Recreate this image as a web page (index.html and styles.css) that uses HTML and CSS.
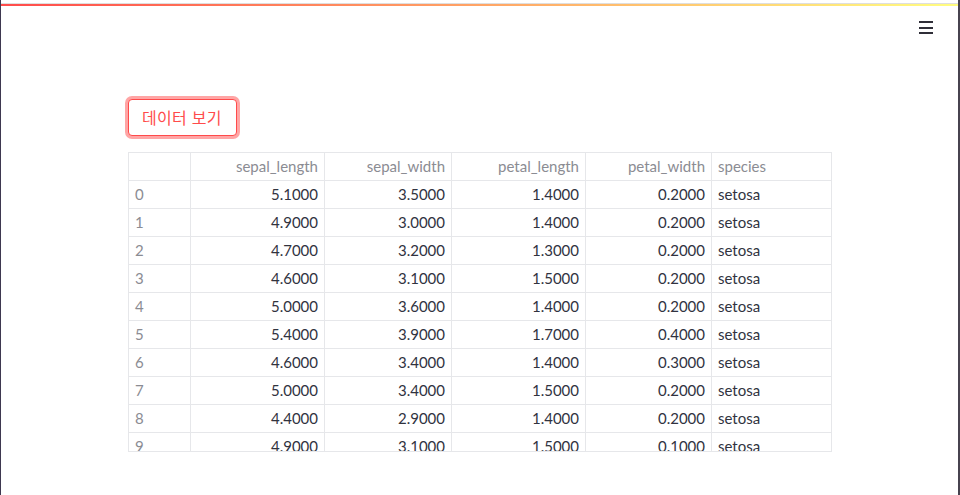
FILE: index.html
```html
<!DOCTYPE html>
<html lang="ko">
<head>
  <meta charset="UTF-8" />
  <meta name="viewport" content="width=device-width, initial-scale=1" />
  <title>iris</title>
  <link rel="stylesheet" href="styles.css">
</head>
<body>
  <div class="frame">
    <div class="decoration"></div>
    <div class="header">
      <div class="menu-btn" title="menu">
        <span></span><span></span><span></span>
      </div>
    </div>

    <div class="main">
      <button class="btn">데이터 보기</button>

      <div class="df-wrap">
        <table class="df">
          <colgroup>
            <col class="c-idx"><col class="c-1"><col class="c-2"><col class="c-3"><col class="c-4"><col class="c-5">
          </colgroup>
          <thead>
            <tr>
              <th></th>
              <th class="num">sepal_length</th>
              <th class="num">sepal_width</th>
              <th class="num">petal_length</th>
              <th class="num">petal_width</th>
              <th>species</th>
            </tr>
          </thead>
          <tbody>
            <tr><td class="idx">0</td><td class="num">5.1000</td><td class="num">3.5000</td><td class="num">1.4000</td><td class="num">0.2000</td><td>setosa</td></tr>
            <tr><td class="idx">1</td><td class="num">4.9000</td><td class="num">3.0000</td><td class="num">1.4000</td><td class="num">0.2000</td><td>setosa</td></tr>
            <tr><td class="idx">2</td><td class="num">4.7000</td><td class="num">3.2000</td><td class="num">1.3000</td><td class="num">0.2000</td><td>setosa</td></tr>
            <tr><td class="idx">3</td><td class="num">4.6000</td><td class="num">3.1000</td><td class="num">1.5000</td><td class="num">0.2000</td><td>setosa</td></tr>
            <tr><td class="idx">4</td><td class="num">5.0000</td><td class="num">3.6000</td><td class="num">1.4000</td><td class="num">0.2000</td><td>setosa</td></tr>
            <tr><td class="idx">5</td><td class="num">5.4000</td><td class="num">3.9000</td><td class="num">1.7000</td><td class="num">0.4000</td><td>setosa</td></tr>
            <tr><td class="idx">6</td><td class="num">4.6000</td><td class="num">3.4000</td><td class="num">1.4000</td><td class="num">0.3000</td><td>setosa</td></tr>
            <tr><td class="idx">7</td><td class="num">5.0000</td><td class="num">3.4000</td><td class="num">1.5000</td><td class="num">0.2000</td><td>setosa</td></tr>
            <tr><td class="idx">8</td><td class="num">4.4000</td><td class="num">2.9000</td><td class="num">1.4000</td><td class="num">0.2000</td><td>setosa</td></tr>
            <tr><td class="idx">9</td><td class="num">4.9000</td><td class="num">3.1000</td><td class="num">1.5000</td><td class="num">0.1000</td><td>setosa</td></tr>
          </tbody>
        </table>
      </div>
    </div>
  </div>
</body>
</html>
```

FILE: styles.css
```css
html, body {
  margin: 0;
  height: 100%;
  background: #ffffff;
}
body {
  font-family: 'Lato', 'Noto Sans', 'Noto Sans CJK KR', sans-serif;
  color: #31333f;
  overflow: hidden;
}
.frame {
  height: 495px;
  box-sizing: border-box;
  border-left: 1px solid #3e3850;
  border-right: 2px solid #47434f;
  padding-top: 3px;
}
.decoration {
  height: 2px;
  border-top: 1px solid #dedede;
  background: linear-gradient(90deg, #ff4b4b, #fffd80);
}
.header {
  display: flex;
  justify-content: flex-end;
  padding: 15px 25px 0 0;
}
.menu-btn {
  width: 14px;
  display: flex;
  flex-direction: column;
  gap: 3.5px;
  cursor: pointer;
}
.menu-btn span {
  display: block;
  height: 2px;
  background: #2f2e38;
}
.main {
  padding: 65px 0 0 127px;
}
.btn {
  display: block;
  height: 37px;
  box-sizing: border-box;
  padding: 0 14px 0 13px;
  border: 1px solid #ff4b4b;
  border-radius: 4px;
  background: #ffffff;
  color: #ff4b4b;
  font-family: 'Noto Sans CJK KR', 'Noto Sans', sans-serif;
  font-size: 16px;
  letter-spacing: 0.3px;
  line-height: 35px;
  box-shadow: 0 0 0 3px rgba(255, 75, 75, 0.5);
  cursor: pointer;
}
.df-wrap {
  margin-top: 16px;
  width: 704px;
  height: 300px;
  overflow: hidden;
  box-sizing: border-box;
  border-bottom: 1px solid #e6e7ea;
}
.df {
  border-collapse: collapse;
  table-layout: fixed;
  width: 704px;
  font-size: 15px;
}
.c-idx { width: 62px; }
.c-1 { width: 134px; }
.c-2 { width: 127px; }
.c-3 { width: 134px; }
.c-4 { width: 126px; }
.c-5 { width: 120px; }
.df th, .df td {
  border: 1px solid #e6e7ea;
  height: 27px;
  padding: 0 6px;
  line-height: 27px;
  white-space: nowrap;
  overflow: hidden;
  text-align: left;
  font-weight: normal;
}
.df th {
  color: #8b8c93;
}
.df td.idx {
  color: #8b8c93;
}
.df .num {
  text-align: right;
}
```
